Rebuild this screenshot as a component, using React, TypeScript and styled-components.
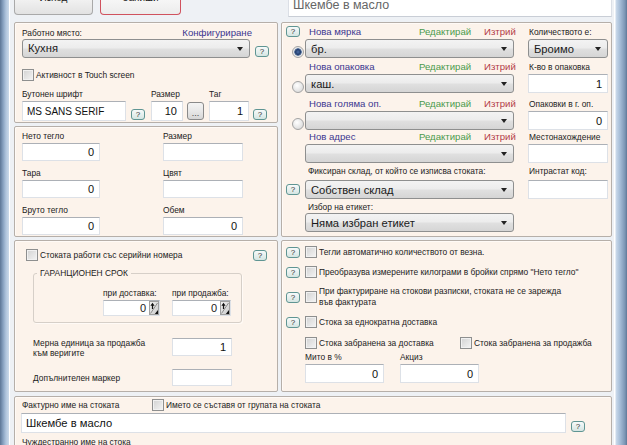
import React from 'react';
import styled, { createGlobalStyle, css } from 'styled-components';

const GlobalStyle = createGlobalStyle`
	html, body {
		margin: 0;
		padding: 0;
		background: #eef1f5;
	}
	body {
		font-family: "Liberation Sans", Arial, sans-serif;
		font-size: 8.4px;
		color: #222;
		overflow: hidden;
	}
	* {
		box-sizing: border-box;
	}
`;

// window chrome
const Window = styled.div`
	display: flex;
	width: 627px;
	height: 445px;
	overflow: hidden;
	background: #eef1f5;
`;

const FrameLeft = styled.div`
	flex: none;
	width: 10px;
	background: linear-gradient(to right, #5d7695 0, #86a0bf 3px, #b0c5dd 6px, #cbdaea 9px, #ffffff 9px);
`;

const FrameRight = styled.div`
	flex: none;
	width: 13px;
	background: linear-gradient(to right, #ffffff 0, #ffffff 1px, #cad9ea 2px, #a6bdd7 6px, #7b95b4 11px, #5f7897 13px);
`;

const Body = styled.div`
	flex: 1;
	min-width: 0;
	display: flex;
	flex-direction: column;
	padding: 0 2px 0 4px;
`;

// top bar
const TopBar = styled.div`
	display: flex;
	align-items: flex-start;
	gap: 7px;
	height: 22px;
	flex: none;
`;

const TopButton = styled.div<{ $w: number; $accent?: boolean }>`
	width: ${(p) => p.$w}px;
	height: 15px;
	overflow: hidden;
	text-align: center;
	font-size: 10px;
	line-height: 10px;
	border: 1px solid ${(p) => (p.$accent ? '#d0525e' : '#a9a9a9')};
	border-top: none;
	border-radius: 0 0 4px 4px;
	background: ${(p) => (p.$accent ? 'linear-gradient(#f6f6f6, #ececec)' : 'linear-gradient(#f1f1f1, #e2e2e2)')};
	span {
		display: block;
		margin-top: -7px;
	}
`;

const TopName = styled.div`
	margin-left: auto;
	width: 324px;
	height: 17px;
	overflow: hidden;
	background: #fff;
	border: 1px solid #dbdfe6;
	border-top: none;
	border-bottom-color: #c9ced6;
	padding-left: 4px;
	font-size: 12.5px;
	line-height: 13px;
	color: #666;
	span {
		display: block;
		margin-top: -1px;
	}
`;

// panels
const MainGrid = styled.div`
	display: grid;
	grid-template-columns: 264px 331px;
	grid-template-rows: 101px 111px 152px;
	gap: 3px;
	flex: none;
`;

const Panel = styled.div<{ $pad: string; $rows?: number }>`
	background: #fcf3eb;
	border: 1px solid #b6afa9;
	border-radius: 2px;
	box-shadow: inset 1px 1px 0 #fffaf6;
	padding: ${(p) => p.$pad};
	${(p) =>
		p.$rows &&
		css`
			grid-row: span ${p.$rows};
		`}
`;

const BottomPanel = styled(Panel)`
	flex: 1;
	margin-top: 4px;
`;

// basic controls
const Caption = styled.div<{ $indent?: number }>`
	font-size: 8.4px;
	line-height: 12px;
	height: 12px;
	white-space: nowrap;
	padding-left: ${(p) => p.$indent ?? 0}px;
`;

const LinkText = styled.span<{ $tone: 'new' | 'edit' | 'del' }>`
	font-size: 9.6px;
	line-height: 12px;
	white-space: nowrap;
	color: ${(p) => (p.$tone === 'new' ? '#3b3690' : p.$tone === 'edit' ? '#4a9a4c' : '#b33b47')};
`;

const Combo = styled.div<{ $w: number }>`
	display: flex;
	align-items: center;
	width: ${(p) => p.$w}px;
	height: 19px;
	padding: 0 6px 0 5px;
	border: 1px solid #8e8f8f;
	border-radius: 3px;
	background: linear-gradient(#f3f3f3 0%, #ececec 48%, #e0e0e0 52%, #d5d5d5 100%);
	font-size: 11.2px;
	color: #1a1a1a;
	white-space: nowrap;
	span {
		flex: 1;
		overflow: hidden;
	}
	&::after {
		content: '';
		border-left: 3.5px solid transparent;
		border-right: 3.5px solid transparent;
		border-top: 4px solid #222;
	}
`;

const Field = styled.div<{ $w: number; $h?: number; $left?: boolean; $fs?: number }>`
	display: flex;
	align-items: center;
	justify-content: ${(p) => (p.$left ? 'flex-start' : 'flex-end')};
	width: ${(p) => p.$w}px;
	height: ${(p) => p.$h ?? 19}px;
	padding: 0 5px 0 4px;
	background: #fff;
	border: 1px solid #dde1e7;
	border-top-color: #acb0b6;
	font-size: ${(p) => p.$fs ?? 11}px;
	color: #111;
	white-space: nowrap;
`;

const HelpBtn = styled.span`
	display: inline-block;
	flex: none;
	width: 14px;
	height: 11px;
	border: 1px solid #5f9593;
	border-radius: 3px;
	background: linear-gradient(#f7fafa, #d5e5e2);
	font-size: 8px;
	line-height: 9px;
	text-align: center;
	color: #333;
`;

const DotsButton = styled.span`
	display: flex;
	align-items: flex-end;
	justify-content: center;
	width: 17px;
	height: 18px;
	padding-bottom: 3px;
	border: 1px solid #8a8a8a;
	border-radius: 3px;
	background: linear-gradient(#f4f4f4 0%, #e8e8e8 50%, #d6d6d6 100%);
	font-size: 9px;
	line-height: 6px;
	color: #444;
`;

const CheckBox = styled.span`
	display: inline-block;
	flex: none;
	width: 12px;
	height: 12px;
	border: 1px solid #8e8f8f;
	background: linear-gradient(135deg, #d2d2d2, #f4f4f4);
	box-shadow: inset 0 0 0 1px #f1f1f1;
`;

const Radio = styled.span<{ $on?: boolean }>`
	display: inline-block;
	width: 12px;
	height: 12px;
	border-radius: 50%;
	border: 1px solid #a3a3a3;
	background: radial-gradient(circle at 40% 35%, #ffffff 0, #e9e9e9 50%, #d2d2d2 100%);
	${(p) =>
		p.$on &&
		css`
			background: radial-gradient(circle at 50% 50%, #4a6ea8 0, #243f6e 2.5px, #5f7aa3 3.5px, #e6e6e6 4px, #f2f2f2 100%);
		`}
`;

const CheckRow = styled.div<{ $mt?: number }>`
	display: flex;
	align-items: center;
	gap: 2px;
	margin-top: ${(p) => p.$mt ?? 0}px;
	white-space: nowrap;
	font-size: 8.4px;
	line-height: 12px;
`;

// workplace panel
const HeadRow = styled.div`
	display: flex;
	justify-content: space-between;
	align-items: flex-end;
	width: 230px;
`;

const ControlRow = styled.div`
	display: flex;
	align-items: flex-end;
	gap: 5px;
	height: 19px;
	span:last-child {
		margin-bottom: 1px;
	}
`;

const FontGrid = styled.div`
	display: grid;
	grid-template-columns: 109px 20px 36px 22px 44px 14px;
	grid-template-rows: 12px 20px;
	row-gap: 1px;
	margin-top: 7px;
	align-items: center;
	${HelpBtn} {
		align-self: end;
		margin-bottom: 1px;
	}
`;

// weight panel
const PairGrid = styled.div<{ $cols: string; $gap: number }>`
	display: grid;
	grid-template-columns: ${(p) => p.$cols};
	row-gap: ${(p) => p.$gap}px;
`;

const FieldCell = styled.div`
	display: flex;
	flex-direction: column;
	gap: 1px;
`;

// serial panel
const SerialHead = styled.div`
	display: flex;
	justify-content: space-between;
	align-items: center;
	height: 12px;
`;

const Group = styled.fieldset`
	margin: 6px 0 0 7px;
	padding: 0 0 6px 0;
	width: 209px;
	border: 1px solid #d6cfc8;
	border-radius: 3px;
	box-shadow: 1px 1px 0 #fffaf6;
	legend {
		margin-left: 3px;
		padding: 0 3px;
		font-size: 8.4px;
		line-height: 12px;
	}
`;

const SpinGrid = styled.div`
	display: grid;
	grid-template-columns: 69px 60px;
	grid-template-rows: 12px 16px;
	row-gap: 1px;
	margin: 8px 0 0 69px;
`;

const SpinField = styled.div<{ $w: number }>`
	display: flex;
	align-items: stretch;
	width: ${(p) => p.$w}px;
	height: 16px;
	background: #fff;
	border: 1px solid #dde1e7;
	border-top-color: #acb0b6;
	font-size: 11px;
	span {
		flex: 1;
		text-align: right;
		padding-right: 3px;
		line-height: 14px;
	}
`;

const UnitGrid = styled.div`
	display: grid;
	grid-template-columns: 139px 60px;
	grid-template-rows: 20px 17px;
	row-gap: 12px;
	margin: 14px 0 0 7px;
	align-items: center;
`;

const TwoLine = styled.div`
	font-size: 8.4px;
	line-height: 10px;
	align-self: start;
	padding-top: 1px;
`;

// measure panel
const Block = styled.div<{ $mt: number; $gap: number }>`
	display: grid;
	grid-template-columns: 19px 209px 94px;
	grid-template-rows: 12px 19px;
	row-gap: ${(p) => p.$gap}px;
	margin-top: ${(p) => p.$mt}px;
`;

const Gutter = styled.div<{ $place: 'start' | 'center' | 'end' }>`
	display: flex;
	align-items: ${(p) => (p.$place === 'end' ? 'flex-end' : p.$place === 'center' ? 'center' : 'flex-start')};
	justify-content: ${(p) => (p.$place === 'end' ? 'flex-end' : 'flex-start')};
	padding-right: 1px;
`;

const ActionLabel = styled.div`
	display: grid;
	grid-template-columns: 110px 65px auto;
	padding-left: 4px;
	align-items: end;
`;

const Side = styled.div`
	padding-left: 14px;
`;

// options panel
const OptionRow = styled.div<{ $mt?: number }>`
	display: flex;
	align-items: center;
	min-height: 12px;
	margin-top: ${(p) => p.$mt ?? 0}px;
	font-size: 8.4px;
	line-height: 11px;
	white-space: nowrap;
	${HelpBtn} {
		margin-right: 5px;
	}
	${CheckBox} {
		margin-right: 2px;
	}
`;

const BanGrid = styled.div`
	display: grid;
	grid-template-columns: 155px auto;
	margin-top: 9px;
	padding-left: 19px;
`;

const DutyGrid = styled.div`
	display: grid;
	grid-template-columns: 95px 79px;
	grid-template-rows: 12px 19px;
	row-gap: 1px;
	margin-top: 2px;
	padding-left: 19px;
`;

// invoice panel
const InvoiceHead = styled.div`
	display: flex;
	align-items: center;
	height: 12px;
	${Caption} {
		width: 131px;
	}
`;

const InvoiceRow = styled.div`
	display: flex;
	align-items: flex-end;
	gap: 5px;
	margin-top: 2px;
	${HelpBtn} {
		margin-bottom: 1px;
	}
`;

const ForeignCaption = styled(Caption)`
	margin-top: 3px;
`;

const Spin = () => (
	<svg width="10" height="14" viewBox="0 0 10 14" style={{ display: 'block', flex: 'none' }}>
		<defs>
			<linearGradient id="spg" x1="0" y1="0" x2="1" y2="1">
				<stop offset="0" stopColor="#f2f2f2" />
				<stop offset="1" stopColor="#c9c9c9" />
			</linearGradient>
		</defs>
		<rect x="0.5" y="0.5" width="9" height="13" fill="url(#spg)" stroke="#a0a0a0" />
		<path d="M1.5 12.5 L8.5 2" stroke="#8c8c8c" strokeWidth="1" />
		<path d="M3.5 1.8 L1.4 4.8 H2.9 V8 H4.1 V4.8 H5.6 Z" fill="#111" />
		<path d="M9 9 L9 13 L5.8 13 Z" fill="#111" />
	</svg>
);

type BlockProps = {
	mt: number;
	gap: number;
	top?: React.ReactNode;
	bottom?: React.ReactNode;
	bottomPlace?: 'center' | 'end';
	label: React.ReactNode;
	control: React.ReactNode;
	sideLabel?: string;
	side?: React.ReactNode;
};

const MeasureBlock = ({ mt, gap, top, bottom, bottomPlace = 'end', label, control, sideLabel, side }: BlockProps) => (
	<Block $mt={mt} $gap={gap}>
		<Gutter $place="start">{top}</Gutter>
		{label}
		<Side>{sideLabel && <Caption $indent={1}>{sideLabel}</Caption>}</Side>
		<Gutter $place={bottomPlace}>{bottom}</Gutter>
		{control}
		<Side>{side}</Side>
	</Block>
);

const Actions = ({ title }: { title: string }) => (
	<ActionLabel>
		<LinkText $tone="new">{title}</LinkText>
		<LinkText $tone="edit">Редактирай</LinkText>
		<LinkText $tone="del">Изтрий</LinkText>
	</ActionLabel>
);

const App = () => {
	return (
		<Window>
			<GlobalStyle />
			<FrameLeft />
			<Body>
				<TopBar>
					<TopButton $w={79}>
						<span>Изход</span>
					</TopButton>
					<TopButton $w={81} $accent>
						<span>Запиши</span>
					</TopButton>
					<TopName>
						<span>Шкембе в масло</span>
					</TopName>
				</TopBar>

				<MainGrid>
					<Panel $pad="4px 0 0 7px">
						<HeadRow>
							<Caption>Работно място:</Caption>
							<LinkText $tone="new">Конфигуриране</LinkText>
						</HeadRow>
						<ControlRow>
							<Combo $w={228}>
								<span>Кухня</span>
							</Combo>
							<HelpBtn>?</HelpBtn>
						</ControlRow>
						<CheckRow $mt={11}>
							<CheckBox />
							<span>Активност в Touch screen</span>
						</CheckRow>
						<FontGrid>
							<Caption>Бутонен шрифт</Caption>
							<span />
							<Caption>Размер</Caption>
							<span />
							<Caption>Таг</Caption>
							<span />
							<Field $w={104} $h={20} $left $fs={10}>
								MS SANS SERIF
							</Field>
							<HelpBtn>?</HelpBtn>
							<Field $w={32} $h={20}>
								10
							</Field>
							<DotsButton>...</DotsButton>
							<Field $w={40} $h={20}>
								1
							</Field>
							<HelpBtn>?</HelpBtn>
						</FontGrid>
					</Panel>

					<Panel $pad="3px 4px 0 4px" $rows={2}>
						<MeasureBlock
							mt={0}
							gap={1}
							top={<HelpBtn>?</HelpBtn>}
							bottom={<Radio $on />}
							label={<Actions title="Нова мярка" />}
							control={
								<Combo $w={209}>
									<span>бр.</span>
								</Combo>
							}
							sideLabel="Количеството е:"
							side={
								<Combo $w={80}>
									<span>Броимо</span>
								</Combo>
							}
						/>
						<MeasureBlock
							mt={3}
							gap={1}
							bottom={<Radio />}
							label={<Actions title="Нова опаковка" />}
							control={
								<Combo $w={209}>
									<span>каш.</span>
								</Combo>
							}
							sideLabel="К-во в опаковка"
							side={<Field $w={80}>1</Field>}
						/>
						<MeasureBlock
							mt={5}
							gap={1}
							bottom={<Radio />}
							label={<Actions title="Нова голяма оп." />}
							control={
								<Combo $w={209}>
									<span />
								</Combo>
							}
							sideLabel="Опаковки в г. оп."
							side={<Field $w={80}>0</Field>}
						/>
						<MeasureBlock
							mt={1}
							gap={1}
							label={<Actions title="Нов адрес" />}
							control={
								<Combo $w={209}>
									<span />
								</Combo>
							}
							sideLabel="Местонахождение"
							side={<Field $w={80} />}
						/>
						<MeasureBlock
							mt={2}
							gap={3}
							bottom={<HelpBtn>?</HelpBtn>}
							bottomPlace="center"
							label={<Caption $indent={3}>Фиксиран склад, от който се изписва стоката:</Caption>}
							control={
								<Combo $w={209}>
									<span>Собствен склад</span>
								</Combo>
							}
							sideLabel="Интрастат код:"
							side={<Field $w={80} />}
						/>
						<MeasureBlock
							mt={2}
							gap={0}
							label={<Caption $indent={3}>Избор на етикет:</Caption>}
							control={
								<Combo $w={209}>
									<span>Няма избран етикет</span>
								</Combo>
							}
						/>
					</Panel>

					<Panel $pad="3px 0 0 7px">
						<PairGrid $cols="141px 80px" $gap={6}>
							<FieldCell>
								<Caption>Нето тегло</Caption>
								<Field $w={78} $h={18}>
									0
								</Field>
							</FieldCell>
							<FieldCell>
								<Caption>Размер</Caption>
								<Field $w={80} $h={18} />
							</FieldCell>
							<FieldCell>
								<Caption>Тара</Caption>
								<Field $w={78} $h={18}>
									0
								</Field>
							</FieldCell>
							<FieldCell>
								<Caption>Цвят</Caption>
								<Field $w={80} $h={18} />
							</FieldCell>
							<FieldCell>
								<Caption>Бруто тегло</Caption>
								<Field $w={78} $h={18}>
									0
								</Field>
							</FieldCell>
							<FieldCell>
								<Caption>Обем</Caption>
								<Field $w={80} $h={18}>
									0
								</Field>
							</FieldCell>
						</PairGrid>
					</Panel>

					<Panel $pad="8px 10px 0 11px">
						<SerialHead>
							<CheckRow>
								<CheckBox />
								<span>Стоката работи със серийни номера</span>
							</CheckRow>
							<HelpBtn>?</HelpBtn>
						</SerialHead>
						<Group>
							<legend>ГАРАНЦИОНЕН СРОК</legend>
							<SpinGrid>
								<Caption>при доставка:</Caption>
								<Caption>при продажба:</Caption>
								<SpinField $w={57}>
									<span>0</span>
									<Spin />
								</SpinField>
								<SpinField $w={59}>
									<span>0</span>
									<Spin />
								</SpinField>
							</SpinGrid>
						</Group>
						<UnitGrid>
							<TwoLine>
								Мерна единица за продажба
								<br />
								към веригите
							</TwoLine>
							<Field $w={60} $h={18}>
								1
							</Field>
							<Caption>Допълнителен маркер</Caption>
							<Field $w={60} $h={17} />
						</UnitGrid>
					</Panel>

					<Panel $pad="3px 4px 0 4px">
						<OptionRow $mt={2}>
							<HelpBtn>?</HelpBtn>
							<CheckBox />
							<span>Тегли автоматично количеството от везна.</span>
						</OptionRow>
						<OptionRow $mt={8}>
							<HelpBtn>?</HelpBtn>
							<CheckBox />
							<span>Преобразува измерените килограми в бройки спрямо "Нето тегло"</span>
						</OptionRow>
						<OptionRow $mt={8}>
							<HelpBtn>?</HelpBtn>
							<CheckBox />
							<span>
								При фактуриране на стокови разписки, стоката не се зарежда
								<br />
								във фактурата
							</span>
						</OptionRow>
						<OptionRow $mt={8}>
							<HelpBtn>?</HelpBtn>
							<CheckBox />
							<span>Стока за еднократна доставка</span>
						</OptionRow>
						<BanGrid>
							<OptionRow>
								<CheckBox />
								<span>Стока забранена за доставка</span>
							</OptionRow>
							<OptionRow>
								<CheckBox />
								<span>Стока забранена за продажба</span>
							</OptionRow>
						</BanGrid>
						<DutyGrid>
							<Caption>Мито в %</Caption>
							<Caption>Акциз</Caption>
							<Field $w={79}>0</Field>
							<Field $w={79}>0</Field>
						</DutyGrid>
					</Panel>
				</MainGrid>

				<BottomPanel $pad="2px 0 0 6px">
					<InvoiceHead>
						<Caption $indent={1}>Фактурно име на стоката</Caption>
						<CheckRow>
							<CheckBox />
							<span>Името се съставя от групата на стоката</span>
						</CheckRow>
					</InvoiceHead>
					<InvoiceRow>
						<Field $w={545} $h={20} $left $fs={11.2}>
							Шкембе в масло
						</Field>
						<HelpBtn>?</HelpBtn>
					</InvoiceRow>
					<ForeignCaption $indent={1}>Чуждестранно име на стока</ForeignCaption>
				</BottomPanel>
			</Body>
			<FrameRight />
		</Window>
	);
};

export default App;
